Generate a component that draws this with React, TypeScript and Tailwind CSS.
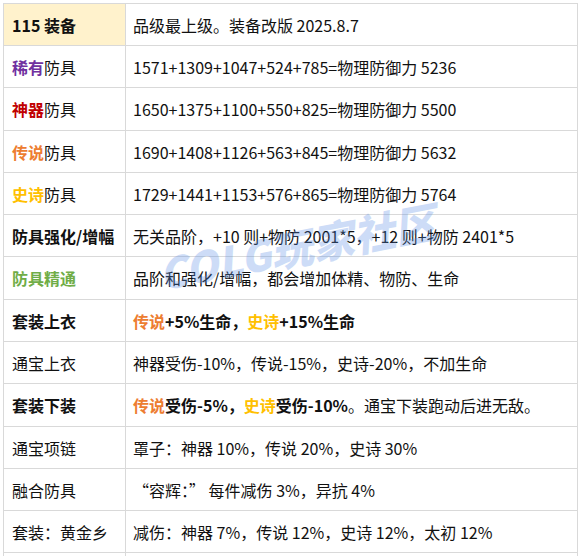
import React from "react";

const P = ({ children }: { children: React.ReactNode }) => <span className="font-bold text-[#7030a0]">{children}</span>;
const R = ({ children }: { children: React.ReactNode }) => <span className="font-bold text-[#c00000]">{children}</span>;
const O = ({ children }: { children: React.ReactNode }) => <span className="font-bold text-[#ed7d31]">{children}</span>;
const Y = ({ children }: { children: React.ReactNode }) => <span className="font-bold text-[#ffc000]">{children}</span>;

type Row = { h: string; left: React.ReactNode; right: React.ReactNode; leftCls?: string; rightCls?: string };

const rows: Row[] = [
  { h: "h-[42px]", left: "115 装备", leftCls: "font-bold bg-[#fff2cc]", right: "品级最上级。装备改版 2025.8.7" },
  { h: "h-[42px]", left: <><P>稀有</P>防具</>, right: "1571+1309+1047+524+785=物理防御力 5236" },
  { h: "h-[43px]", left: <><R>神器</R>防具</>, right: "1650+1375+1100+550+825=物理防御力 5500" },
  { h: "h-[42px]", left: <><O>传说</O>防具</>, right: "1690+1408+1126+563+845=物理防御力 5632" },
  { h: "h-[42px]", left: <><Y>史诗</Y>防具</>, right: "1729+1441+1153+576+865=物理防御力 5764" },
  { h: "h-[42px]", left: "防具强化/增幅", leftCls: "font-bold", right: "无关品阶，+10 则+物防 2001*5，+12 则+物防 2401*5" },
  { h: "h-[43px]", left: "防具精通", leftCls: "font-bold text-[#70ad47]", right: "品阶和强化/增幅，都会增加体精、物防、生命" },
  { h: "h-[42px]", left: "套装上衣", leftCls: "font-bold", rightCls: "font-bold", right: <><O>传说</O>+5%生命，<Y>史诗</Y>+15%生命</> },
  { h: "h-[42px]", left: "通宝上衣", right: "神器受伤-10%，传说-15%，史诗-20%，不加生命" },
  { h: "h-[43px]", left: "套装下装", leftCls: "font-bold", right: <><span className="font-bold"><O>传说</O>受伤-5%，<Y>史诗</Y>受伤-10%</span>。通宝下装跑动后进无敌。</> },
  { h: "h-[42px]", left: "通宝项链", right: "罩子：神器 10%，传说 20%，史诗 30%" },
  { h: "h-[42px]", left: "融合防具", right: "“容辉：” 每件减伤 3%，异抗 4%" },
  { h: "h-[42px]", left: "套装：黄金乡", right: "减伤：神器 7%，传说 12%，史诗 12%，太初 12%" },
  { h: "h-[42px]", left: "", right: "" },
];

export default function App() {
  return (
    <div
      className="relative w-[581px] h-[556px] overflow-hidden bg-white text-[16px] text-[#111]"
      style={{ fontFamily: '"Noto Sans CJK SC", "Noto Sans", sans-serif' }}
    >
      <div className="ml-[3px] mt-[3px] w-[575px] border-l border-t border-[#d9d9d9]">
        {rows.map((r, i) => (
          <div key={i} className={`flex ${r.h}`}>
            <div className={`w-[122px] shrink-0 flex items-center pl-[8px] border-r border-b border-[#d9d9d9] whitespace-nowrap ${r.leftCls ?? ""}`}>
              <span>{r.left}</span>
            </div>
            <div className={`flex-1 flex items-center pl-[7px] border-r border-b border-[#d9d9d9] whitespace-nowrap ${r.rightCls ?? ""}`}>
              <span>{r.right}</span>
            </div>
          </div>
        ))}
      </div>
      <div
        className="pointer-events-none absolute left-[297px] top-[246px] -translate-x-1/2 -translate-y-1/2 -rotate-[11deg] whitespace-nowrap text-[42px] font-black italic leading-none text-[#5b8fe6] opacity-30"
        style={{ fontFamily: '"Noto Sans CJK SC", sans-serif' }}
      >
        COLG玩家社区
      </div>
    </div>
  );
}
